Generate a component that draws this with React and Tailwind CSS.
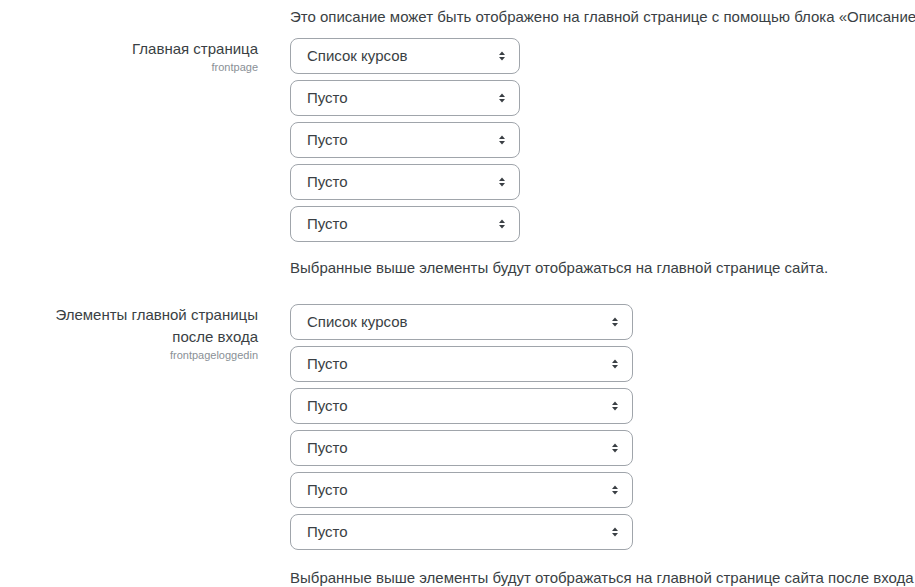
export default function App() {
  const Select = ({ value, wide }) => (
    <div
      className={`${wide ? "w-[343px]" : "w-[230px]"} h-[36px] border border-[#a0a5ab] rounded-lg bg-white flex items-center justify-between pl-[16px] pr-[13px] text-[15px] text-[#3a3f44]`}
    >
      <span>{value}</span>
      <svg width="8" height="12" viewBox="0 0 8 12" className="text-[#3a3f44]">
        <path d="M4 1.5 L7 5 H1 Z" fill="currentColor" />
        <path d="M4 10.5 L7 7 H1 Z" fill="currentColor" />
      </svg>
    </div>
  );

  return (
    <div className="w-[915px] h-[587px] bg-white overflow-hidden font-['Liberation_Sans',Arial,sans-serif] text-[#3a3f44]">
      <div className="pl-[290px] pt-[7px] text-[15px] leading-[20px] whitespace-nowrap">
        Это описание может быть отображено на главной странице с помощью блока «Описание
      </div>

      <div className="flex mt-[11px]">
        <div className="w-[258px] shrink-0 text-right">
          <div className="text-[15px] leading-[22px]">Главная страница</div>
          <div className="text-[11px] leading-[14px] text-[#8a9096]">frontpage</div>
        </div>
        <div className="ml-[32px] flex flex-col gap-[6px]">
          <Select value="Список курсов" />
          <Select value="Пусто" />
          <Select value="Пусто" />
          <Select value="Пусто" />
          <Select value="Пусто" />
        </div>
      </div>

      <div className="pl-[290px] mt-[16px] text-[15px] leading-[20px] whitespace-nowrap">
        Выбранные выше элементы будут отображаться на главной странице сайта.
      </div>

      <div className="flex mt-[26px]">
        <div className="w-[258px] shrink-0 text-right">
          <div className="text-[15px] leading-[22px]">
            Элементы главной страницы
            <br />
            после входа
          </div>
          <div className="text-[11px] leading-[14px] text-[#8a9096]">frontpageloggedin</div>
        </div>
        <div className="ml-[32px] flex flex-col gap-[6px]">
          <Select value="Список курсов" wide />
          <Select value="Пусто" wide />
          <Select value="Пусто" wide />
          <Select value="Пусто" wide />
          <Select value="Пусто" wide />
          <Select value="Пусто" wide />
        </div>
      </div>

      <div className="pl-[290px] mt-[18px] text-[15px] leading-[20px] whitespace-nowrap">
        Выбранные выше элементы будут отображаться на главной странице сайта после входа
      </div>
    </div>
  );
}
